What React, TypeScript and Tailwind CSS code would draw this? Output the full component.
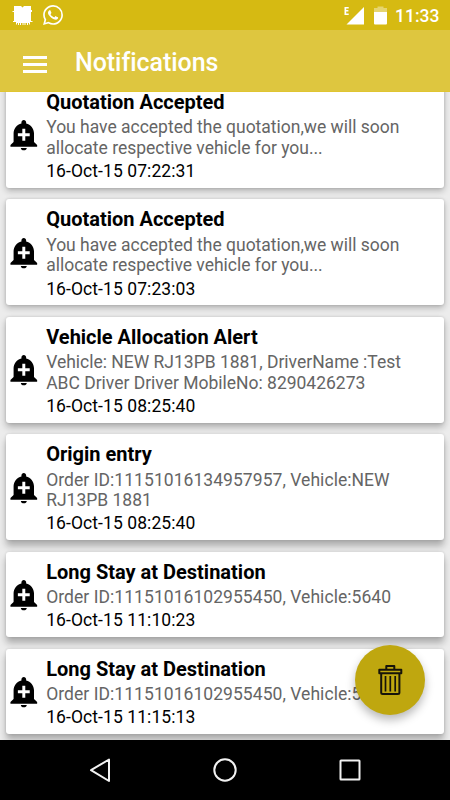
import React from 'react';

type Notification = {
  title: string;
  lines: string[];
  date: string;
  shadow: string;
};

// Card shadows get deeper further down the screen
const shadowLight = 'shadow-[0_3px_6px_rgba(0,0,0,0.24),0_0_3px_rgba(0,0,0,0.14)]';
const shadowMedium = 'shadow-[0_4px_7px_rgba(0,0,0,0.27),0_0_3px_rgba(0,0,0,0.14)]';
const shadowDeep = 'shadow-[0_6px_7px_rgba(0,0,0,0.27),0_0_3px_rgba(0,0,0,0.14)]';

const notifications: Notification[] = [
  {
    title: 'Quotation Accepted',
    lines: ['You have accepted the quotation,we will soon', 'allocate respective vehicle for you...'],
    date: '16-Oct-15 07:22:31',
    shadow: shadowLight,
  },
  {
    title: 'Quotation Accepted',
    lines: ['You have accepted the quotation,we will soon', 'allocate respective vehicle for you...'],
    date: '16-Oct-15 07:23:03',
    shadow: shadowLight,
  },
  {
    title: 'Vehicle Allocation Alert',
    lines: ['Vehicle: NEW RJ13PB 1881, DriverName :Test', 'ABC Driver Driver MobileNo: 8290426273'],
    date: '16-Oct-15 08:25:40',
    shadow: shadowMedium,
  },
  {
    title: 'Origin entry',
    lines: ['Order ID:11151016134957957, Vehicle:NEW', 'RJ13PB 1881'],
    date: '16-Oct-15 08:25:40',
    shadow: shadowDeep,
  },
  {
    title: 'Long Stay at Destination',
    lines: ['Order ID:11151016102955450, Vehicle:5640'],
    date: '16-Oct-15 11:10:23',
    shadow: shadowDeep,
  },
  {
    title: 'Long Stay at Destination',
    lines: ['Order ID:11151016102955450, Vehicle:5640'],
    date: '16-Oct-15 11:15:13',
    shadow: shadowDeep,
  },
];

const BellIcon = () => (
  <svg viewBox="0 0 24 24" fill="currentColor" className="-mt-[2px] w-[35.6px] h-[35.6px] shrink-0">
    <path d="M10.01 20.900c0 1.050.89 1.600 1.990 1.600s1.990-.550 1.990-1.600h-3.980zM18.880 16.820V11c0-3.250-2.250-5.970-5.290-6.690v-.720C13.590 2.710 12.880 2 12 2s-1.590.710-1.590 1.590v.720C7.370 5.030 5.120 7.750 5.120 11v5.820L3 18.940V20h18v-1.060l-2.120-2.120zM16 13.010h-3v3h-2v-3H8V11h3V8h2v3h3v2.010z" />
  </svg>
);

const StatusBar = () => (
  <div className="h-[30px] shrink-0 bg-[#d6ba12] flex items-center justify-between pl-[12px] pr-[10px] text-white">
    <div className="flex items-center gap-[10px]">
      <svg viewBox="0 0 21 21" fill="currentColor" className="w-[21px] h-[21px]">
        <path d="M2 1h7l1.500 1.500L12 1h7v4h1v2h-1v9h1.500v1H18v2.500h-1V18h-1v2h-1v-2h-1.500v2h-1v-2h-1v2h-1v-2H9v2H8v-2H7v2H6v-2H5v1.500H4V17H1v-1h1V7H.500V6H2z" />
      </svg>
      <svg viewBox="0 0 24 24" fill="currentColor" className="w-[20px] h-[20px]">
        <path d="M17.472 14.382c-.297-.149-1.758-.867-2.030-.967-.273-.099-.471-.148-.670.150-.197.297-.767.966-.940 1.164-.173.199-.347.223-.644.075-.297-.150-1.255-.463-2.390-1.475-.883-.788-1.480-1.761-1.653-2.059-.173-.297-.018-.458.130-.606.134-.133.298-.347.446-.520.149-.174.198-.298.298-.497.099-.198.050-.371-.025-.520-.075-.149-.669-1.612-.916-2.207-.242-.579-.487-.500-.669-.510-.173-.008-.371-.010-.570-.010-.198 0-.520.074-.792.372-.272.297-1.040 1.016-1.040 2.479 0 1.462 1.065 2.875 1.213 3.074.149.198 2.096 3.200 5.077 4.487.709.306 1.262.489 1.694.625.712.227 1.360.195 1.871.118.571-.085 1.758-.719 2.006-1.413.248-.694.248-1.289.173-1.413-.074-.124-.272-.198-.570-.347m-5.421 7.403h-.004a9.870 9.870 0 01-5.031-1.378l-.361-.214-3.741.982.998-3.648-.235-.374a9.860 9.860 0 01-1.510-5.260c.001-5.450 4.436-9.884 9.888-9.884 2.640 0 5.122 1.030 6.988 2.898a9.825 9.825 0 012.893 6.994c-.003 5.450-4.437 9.884-9.885 9.884m8.413-18.297A11.815 11.815 0 0012.050 0C5.495 0 .160 5.335.157 11.892c0 2.096.547 4.142 1.588 5.945L.057 24l6.305-1.654a11.882 11.882 0 005.683 1.448h.005c6.554 0 11.890-5.335 11.893-11.893a11.821 11.821 0 00-3.480-8.413z" />
      </svg>
    </div>
    <div className="flex items-center">
      <svg viewBox="0 0 20 19" fill="currentColor" className="w-[20px] h-[19px]">
        <path d="M20 1v17.500H2.500z" />
        <path d="M.5 1h4.200v1.500H2.200v1.600h2.200v1.500H2.200v1.900h2.500V9H.5z" />
      </svg>
      <svg viewBox="0 0 13 19" fill="currentColor" className="ml-[10px] w-[13px] h-[19px]">
        <path d="M3.500 .5h6v1.500H13V7H0V2h3.500z" opacity=".4" />
        <path d="M0 6h13v11.500a1 1 0 0 1-1 1H1a1 1 0 0 1-1-1z" />
      </svg>
      <span className="ml-[8px] mt-[1px] w-[45px] text-[17.5px] leading-[20px] font-medium whitespace-nowrap">11:33</span>
    </div>
  </div>
);

const AppBar = () => (
  <header className="relative z-10 h-[62px] shrink-0 bg-[#dec63f] border-b border-[#e0c530] flex items-center pl-[23px] text-white">
    <button aria-label="Menu" className="mt-[8px] flex flex-col gap-[4.5px]">
      <span className="block w-6 h-[2.5px] bg-white" />
      <span className="block w-6 h-[2.5px] bg-white" />
      <span className="block w-6 h-[2.5px] bg-white" />
    </button>
    <h1 className="ml-[28px] mt-[5px] text-[25px] leading-[30px] tracking-[-0.05px] font-medium">Notifications</h1>
  </header>
);

const NotificationCard = ({ title, lines, date, shadow }: Notification) => (
  <article className={`flex items-center rounded-[3px] bg-white pt-[8.7px] pb-[6px] ${shadow}`}>
    <BellIcon />
    <div className="ml-[4.6px] whitespace-nowrap">
      <h2 className="text-[20px] leading-[23.5px] font-bold text-black">{title}</h2>
      <div className="mt-[3.1px] text-[17.5px] leading-[20.5px] text-[#656565]">
        {lines.map((line) => (
          <p key={line} className={line.startsWith('Order') ? 'tracking-[0.05px]' : 'tracking-[-0.01px]'}>
            {line}
          </p>
        ))}
      </div>
      <p className="mt-[2.8px] text-[17.5px] leading-[20.5px] tracking-[0.08px] text-black">{date}</p>
    </div>
  </article>
);

const NavBar = () => (
  <nav className="relative z-10 h-[60px] shrink-0 bg-black">
    <svg viewBox="0 0 450 60" fill="none" stroke="#f2f2f2" strokeWidth="2" strokeLinejoin="round" className="w-full h-full">
      <path d="M91 30.200 109 19.500V41z" />
      <circle cx="225" cy="30" r="10.700" />
      <rect x="340.500" y="20.500" width="19" height="19" rx=".5" />
    </svg>
  </nav>
);

const App = () => {
  return (
    <div className="relative w-[450px] h-[800px] overflow-hidden flex flex-col bg-[#ececec] font-[Roboto,sans-serif]">
      <StatusBar />
      <AppBar />

      {/* List is scrolled, so the first card starts under the app bar */}
      <main className="flex-1 min-h-0">
        <div className="-mt-[10px] px-[6px] flex flex-col gap-[11.9px]">
          {notifications.map((item) => (
            <NotificationCard key={item.date + item.title} {...item} />
          ))}
        </div>
      </main>

      <NavBar />

      {/* Floating delete button */}
      <button
        aria-label="Delete"
        className="absolute left-[355px] top-[645px] w-[70px] h-[70px] rounded-full bg-[#bfa70f] flex items-center justify-center shadow-[0_5px_10px_rgba(0,0,0,0.28)]"
      >
        <svg viewBox="0 0 26 32" fill="none" stroke="#17140a" strokeWidth="2" strokeLinejoin="round" className="w-[26px] h-[32px]">
          <path d="M9.300 5.500V2h8v3.500M2.300 5.700h22v3.600h-22zM4.200 9.500v19a1.500 1.500 0 0 0 1.500 1.500h15.200a1.500 1.500 0 0 0 1.500-1.500V9.500" />
          <path d="M8.500 12v15.500M13.300 12v15.500M18.200 12v15.500" strokeWidth="1.700" />
        </svg>
      </button>
    </div>
  );
};

export default App;
